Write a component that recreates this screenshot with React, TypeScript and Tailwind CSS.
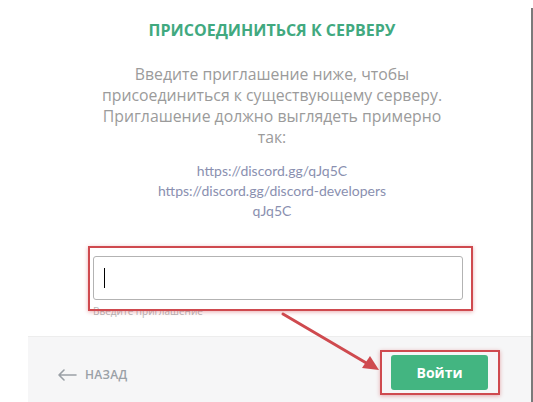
import React from "react";

const RED = "border-[#cf4a4f]";

function BackArrow() {
  return (
    <svg width="20" height="12" viewBox="0 0 20 12" fill="none">
      <path d="M19 6H2M7 1L2 6l5 5" stroke="#9aa0a6" strokeWidth="1.6" strokeLinecap="round" strokeLinejoin="round" />
    </svg>
  );
}

export default function App() {
  return (
    <div className="relative w-[533px] h-[402px] bg-white overflow-hidden flex font-['Open_Sans',sans-serif]">
      <div className="w-[28px]" />
      <div className="w-[503px] flex flex-col">
        {/* content */}
        <div className="flex-1 flex flex-col pr-[15px]">
          <h1 className="mt-[20px] text-center text-[16px] leading-[20px] font-bold text-[#41a97f]">
            ПРИСОЕДИНИТЬСЯ К СЕРВЕРУ
          </h1>
          <p className="mt-[24px] mx-auto w-[355px] text-center text-[15.8px] leading-[21px] text-[#9b9b9b]">
            Введите приглашение ниже, чтобы присоединиться к существующему серверу. Приглашение должно выглядеть примерно так:
          </p>
          <div className="mt-[13px] flex flex-col items-center text-[14px] leading-[20px] text-[#8a90b0] font-['Lato',sans-serif]">
            <span>https://discord.gg/qJq5C</span>
            <span>https://discord.gg/discord-developers</span>
            <span>qJq5C</span>
          </div>
          <div className="mt-[35px] ml-[65px] w-[370px]">
            <div className="h-[44px] rounded-[3px] border border-[#b3b3b3] flex items-center pl-[10px]">
              <div className="w-[1px] h-[20px] bg-black" />
            </div>
            <div className="mt-[5px] text-[10px] leading-[12px] text-[#b5b5b5]">Введите приглашение</div>
          </div>
        </div>
        {/* footer */}
        <div className="h-[66px] bg-[#f6f6f7] border-t border-[#ededed] flex items-center justify-between pl-[29px] pr-[43px]">
          <div className="flex items-center gap-[8px] mt-[10px]">
            <BackArrow />
            <span className="text-[12px] font-semibold text-[#9aa0a6] tracking-[0.3px]">НАЗАД</span>
          </div>
          <button className="mt-[6px] w-[97px] h-[35px] rounded-[3px] bg-[#43b581] text-white text-[14px] font-bold">
            Войти
          </button>
        </div>
      </div>
      <div className="w-[2px] mt-[8px] bg-[#7a7a7a]" />

      {/* annotations */}
      <div className={`absolute left-[88px] top-[246px] w-[385px] h-[65px] border-[2.5px] ${RED} shadow-[0_1px_4px_rgba(207,74,79,0.45)]`} />
      <div className={`absolute left-[380px] top-[350px] w-[120px] h-[45px] border-[2.5px] ${RED} shadow-[0_1px_4px_rgba(207,74,79,0.45)]`} />
      <svg className="absolute left-0 top-0" width="533" height="402" viewBox="0 0 533 402">
        <line x1="283" y1="314" x2="368" y2="364" stroke="#cf4a4f" strokeWidth="3" strokeLinecap="round" />
        <polygon points="379,370 362,368 370,356" fill="#cf4a4f" />
      </svg>
    </div>
  );
}
